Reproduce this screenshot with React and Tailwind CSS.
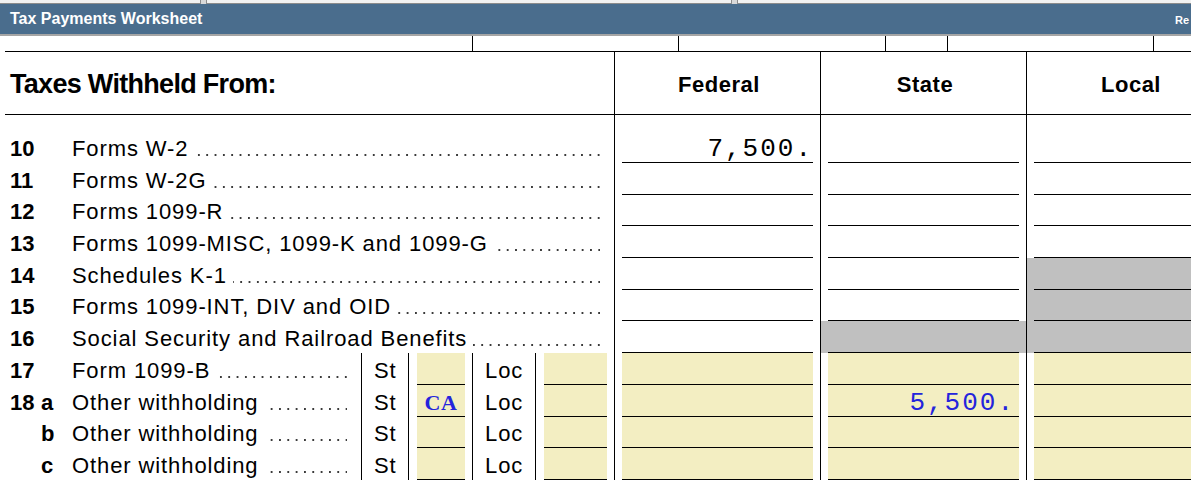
import React from 'react';

const SANS = "font-['Liberation_Sans',Arial,sans-serif]";
const MONO = "font-['Liberation_Mono','Courier_New',monospace]";

// entry fill per column: 'gray' shades the whole cell, 'yellow' tints the field
const lines = [
  { num: '10', label: 'Forms W-2', federal: { value: '7,500.', pad: 'pr-0' } },
  { num: '11', label: 'Forms W-2G' },
  { num: '12', label: 'Forms 1099-R' },
  { num: '13', label: 'Forms 1099-MISC, 1099-K and 1099-G' },
  { num: '14', label: 'Schedules K-1', local: { fill: 'gray' } },
  { num: '15', label: 'Forms 1099-INT, DIV and OID', local: { fill: 'gray' } },
  { num: '16', label: 'Social Security and Railroad Benefits', state: { fill: 'gray' }, local: { fill: 'gray' } },
  { num: '17', label: 'Form 1099-B', split: true, yellow: true },
  { num: '18', letter: 'a', label: 'Other withholding', split: true, yellow: true, st: 'CA', state: { value: '5,500.', blue: true, pad: 'pr-[4px]' } },
  { letter: 'b', label: 'Other withholding', split: true, yellow: true },
  { letter: 'c', label: 'Other withholding', split: true, yellow: true },
];

const Leader = () => (
  <div className="mb-[4px] ml-[6px] h-[2px] flex-1 bg-[linear-gradient(to_right,transparent_6.6px,#3a3a3a_6.6px)] bg-[length:8.33px_2px] bg-size-[8.33px_2px] bg-right bg-repeat-x" />
);

const Amount = ({ value, blue }) => (
  <span className={`${MONO} text-[26px] leading-none tracking-[2px] ${blue ? 'text-[#2424dc]' : 'text-black'}`}>
    {value}
  </span>
);

const AmountCell = ({ spec = {}, yellow }) => (
  <div className={`h-full border-l border-black px-[7px] ${spec.fill === 'gray' ? 'bg-[#c0c0c0]' : ''}`}>
    <div
      className={`flex h-full items-end justify-end border-b border-black ${spec.pad || ''} ${yellow ? 'bg-[#f3eec2]' : ''}`}
    >
      {spec.value && <Amount value={spec.value} blue={spec.blue} />}
    </div>
  </div>
);

const SmallField = ({ width, children }) => (
  <div className={`h-full border-l border-black pl-[8px] pr-[7px] ${width}`}>
    <div className="flex h-full items-end justify-center border-b border-black bg-[#f3eec2]">{children}</div>
  </div>
);

const LineLabel = ({ line }) => (
  <div className={`flex h-full items-end pb-[3px] pl-[5px] pr-[14px] ${line.split ? 'w-[356px]' : 'flex-1'}`}>
    <span className="flex w-[62px] shrink-0 font-bold tracking-normal">
      <span className="w-[31px]">{line.num}</span>
      <span>{line.letter}</span>
    </span>
    <span className="whitespace-nowrap">{line.label}</span>
    <Leader />
  </div>
);

const LineRow = ({ line, first }) => (
  <>
    <div className={`flex ${first ? 'h-[32px]' : 'h-[31.7px]'}`}>
      <LineLabel line={line} />
      {line.split && (
        <>
          <div className="flex h-full w-[47px] items-end border-l border-black pb-[3px] pl-[12px]">St</div>
          <SmallField width="w-[64px]">
            {line.st && (
              <span className="mb-[2px] font-['Liberation_Serif','Times_New_Roman',serif] text-[22px] font-bold leading-none tracking-[0.5px] text-[#2424dc]">
                {line.st}
              </span>
            )}
          </SmallField>
          <div className="flex h-full w-[63px] items-end border-l border-black pb-[3px] pl-[12px]">Loc</div>
          <SmallField width="w-[79px]" />
        </>
      )}
    </div>
    <AmountCell spec={line.federal} yellow={line.yellow} />
    <AmountCell spec={line.state} yellow={line.yellow} />
    <AmountCell spec={line.local} yellow={line.yellow} />
  </>
);

export default function App() {
  return (
    <div className={`h-[481px] w-[1191px] overflow-hidden bg-white text-black ${SANS}`}>
      {/* frame edges of the panels above */}
      <div className="flex h-[4px] bg-[#d8d8d8]">
        <div className="w-[201px] border-b border-r border-[#8c8c8c] bg-[#f2f2f2]" />
        <div className="ml-[5px] w-[526px] border-x border-b border-[#8c8c8c] bg-[#f2f2f2]" />
        <div className="ml-[5px] flex-1 border-b border-l border-[#8c8c8c] bg-[#f2f2f2]" />
      </div>

      <div className="flex h-[32px] items-center border-b-2 border-[#a5a5a5] bg-[#4a6d8d] pl-[10px] text-white">
        <span className="text-[16px] font-bold leading-none">Tax Payments Worksheet</span>
        <span className="ml-auto mt-[3px] w-[16px] overflow-hidden whitespace-nowrap text-[11px] font-bold leading-none">
          Re
        </span>
      </div>

      {/* tail of the previous section's columns */}
      <div className="ml-[5px] grid h-[16px] grid-cols-[467px_206px_207px_62px_206px_206px] border-b border-black">
        <div />
        <div className="border-l border-black" />
        <div className="border-l border-black" />
        <div className="border-l border-black" />
        <div className="border-l border-black" />
        <div className="border-l border-black" />
      </div>

      <div className="ml-[5px] grid h-[63px] grid-cols-[609px_206px_206px_206px] border-b border-black">
        <div className="flex items-center pl-[5px] pt-[2px] text-[27px] font-bold leading-none tracking-[-0.7px]">
          Taxes Withheld From:
        </div>
        {['Federal', 'State', 'Local'].map((h) => (
          <div
            key={h}
            className="flex items-center justify-center border-l border-black pl-[3px] pt-[3px] text-[22px] font-bold leading-none tracking-[0.5px]"
          >
            {h}
          </div>
        ))}
      </div>

      <div className="ml-[5px] grid grid-cols-[609px_206px_206px_206px] text-[22px] leading-none tracking-[0.9px]">
        <div className="h-[16px]" />
        <div className="border-l border-black" />
        <div className="border-l border-black" />
        <div className="border-l border-black" />
        {lines.map((line, i) => (
          <LineRow key={i} line={line} first={i === 0} />
        ))}
      </div>
    </div>
  );
}
